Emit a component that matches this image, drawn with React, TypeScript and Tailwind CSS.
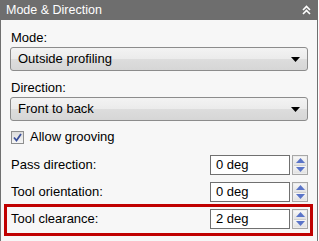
import { useState } from "react";

const font = { fontFamily: '"Liberation Sans", Arial, sans-serif' };

function Dropdown({ value }: { value: string }) {
  return (
    <div className="flex h-[24px] items-center justify-between rounded-[3px] border border-[#8c8c8c] bg-[linear-gradient(#f3f3f3_0%,#ebebeb_50%,#dddddd_50%,#d6d6d6_100%)] pl-[7px] pr-[7px]">
      <span>{value}</span>
      <svg width="9" height="5" viewBox="0 0 9 5">
        <polygon points="0,0 9,0 4.5,5" fill="#000" />
      </svg>
    </div>
  );
}

function Spinner() {
  return (
    <div className="ml-[2px] flex h-[20px] w-[16px] flex-col border border-[#a7a7a7] bg-[#ececec] p-[1px]">
      <div className="flex flex-1 items-center justify-center border-b border-[#cfcfcf] bg-[linear-gradient(#f7f7f7,#e2e2e2)]">
        <svg width="9" height="5" viewBox="0 0 9 5">
          <polygon points="0,5 9,5 4.5,0" fill="#5a74c8" />
        </svg>
      </div>
      <div className="flex flex-1 items-center justify-center bg-[linear-gradient(#f7f7f7,#e2e2e2)]">
        <svg width="9" height="5" viewBox="0 0 9 5">
          <polygon points="0,0 9,0 4.5,5" fill="#5a74c8" />
        </svg>
      </div>
    </div>
  );
}

function NumberRow({ label, value }: { label: string; value: string }) {
  return (
    <div className="flex h-[20px] items-center justify-between">
      <span>{label}</span>
      <div className="flex items-center">
        <div className="flex h-[20px] w-[80px] items-center border border-[#707070] bg-white px-[5px]">
          {value}
        </div>
        <Spinner />
      </div>
    </div>
  );
}

export default function App() {
  const [grooving, setGrooving] = useState(true);

  return (
    <div className="h-[241px] w-[319px] bg-white text-[13px] leading-[16px] text-black" style={font}>
      <div className="h-[241px] w-[318px] border-x border-[#707070] bg-[#f7f7f7]">
        <div className="-mx-px flex h-[20px] items-center justify-between bg-[#6e6e6e] pl-[6px] pr-[7px] text-[12.5px] text-white">
          <span>Mode &amp; Direction</span>
          <svg width="9" height="10" viewBox="0 0 9 10">
            <polyline points="1,5 4.5,1.5 8,5" fill="none" stroke="#fff" strokeWidth="1.6" />
            <polyline points="1,9 4.5,5.5 8,9" fill="none" stroke="#fff" strokeWidth="1.6" />
          </svg>
        </div>

        <div className="pl-[9px] pr-[9px] pt-[10px]">
          <div className="h-[16px] pl-[1px]">Mode:</div>
          <div className="mt-[1px]">
            <Dropdown value="Outside profiling" />
          </div>

          <div className="mt-[9px] h-[16px] pl-[1px]">Direction:</div>
          <div className="mt-[1px]">
            <Dropdown value="Front to back" />
          </div>

          <label className="mt-[8px] flex h-[16px] items-center pl-[1px]">
            <span
              className="flex h-[13px] w-[13px] items-center justify-center border border-[#8e8f8f] bg-[linear-gradient(#dcdcdc,#f6f6f6)]"
              onClick={() => setGrooving(!grooving)}
            >
              {grooving && (
                <svg width="9" height="9" viewBox="0 0 9 9">
                  <polyline points="1,4.5 3.5,7.5 8,1" fill="none" stroke="#3a4f9a" strokeWidth="1.8" />
                </svg>
              )}
            </span>
            <span className="ml-[6px]">Allow grooving</span>
          </label>

          <div className="mt-[10px] pl-[1px]">
            <NumberRow label="Pass direction:" value="0 deg" />
          </div>
          <div className="mt-[7px] pl-[1px]">
            <NumberRow label="Tool orientation:" value="0 deg" />
          </div>
          <div className="-ml-[6px] -mr-[5px] mt-[2px] border-[3px] border-[#c00000] pb-[4px] pl-[4px] pr-[2px] pt-[2px]">
            <NumberRow label="Tool clearance:" value="2 deg" />
          </div>
        </div>
      </div>
    </div>
  );
}
